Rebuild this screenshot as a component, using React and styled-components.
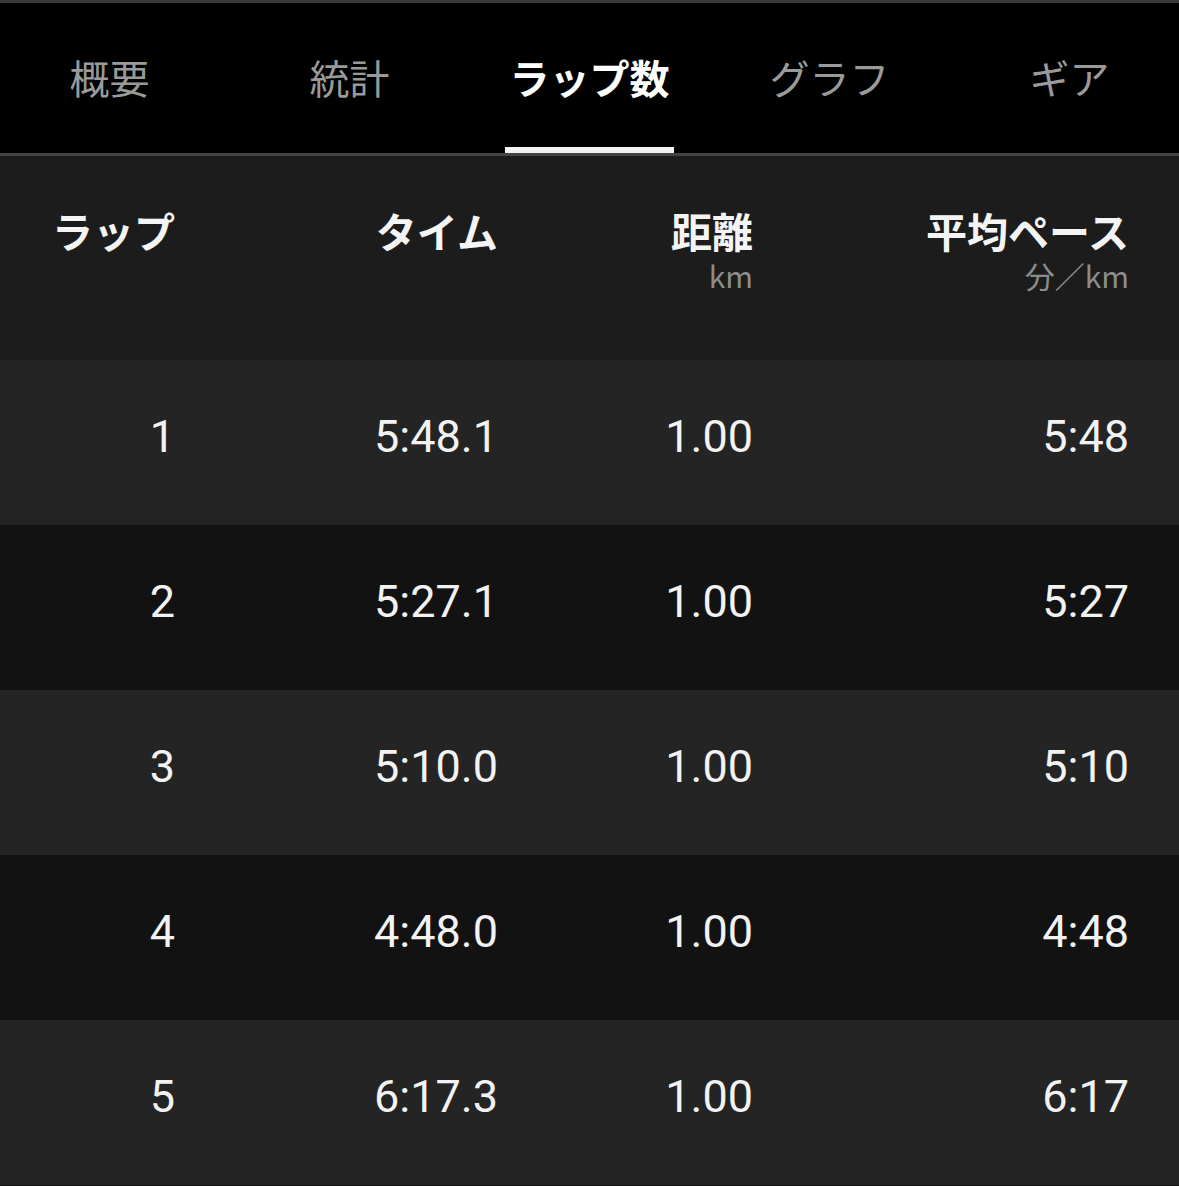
import React from 'react';
import styled, { createGlobalStyle } from 'styled-components';

const tabs = ['概要', '統計', 'ラップ数', 'グラフ', 'ギア'];
const activeTab = 2;

const columns = [
  { label: 'ラップ' },
  { label: 'タイム' },
  { label: '距離', unit: 'km' },
  { label: '平均ペース', unit: '分／km' },
];

const laps = [
  { lap: 1, time: '5:48.1', distance: '1.00', pace: '5:48' },
  { lap: 2, time: '5:27.1', distance: '1.00', pace: '5:27' },
  { lap: 3, time: '5:10.0', distance: '1.00', pace: '5:10' },
  { lap: 4, time: '4:48.0', distance: '1.00', pace: '4:48' },
  { lap: 5, time: '6:17.3', distance: '1.00', pace: '6:17' },
];

const App = () => {
  return (
    <Page>
      <GlobalStyle />
      <TabBar>
        {tabs.map((name, index) => (
          <Tab key={name}>
            <TabLabel active={index === activeTab}>{name}</TabLabel>
            <Indicator active={index === activeTab} />
          </Tab>
        ))}
      </TabBar>
      <HeaderRow>
        {columns.map((col) => (
          <HeaderCell key={col.label}>
            <HeaderLabel>{col.label}</HeaderLabel>
            {col.unit && <Unit>{col.unit}</Unit>}
          </HeaderCell>
        ))}
      </HeaderRow>
      {laps.map((row, index) => (
        <LapRow key={row.lap} dark={index % 2 === 1}>
          <Value>{row.lap}</Value>
          <Value>{row.time}</Value>
          <Value>{row.distance}</Value>
          <Value>{row.pace}</Value>
        </LapRow>
      ))}
      <BottomEdge />
    </Page>
  );
};
export default App;

const GlobalStyle = createGlobalStyle`
  html, body {
    margin: 0;
    padding: 0;
    background: #1c1c1c;
  }
  * {
    box-sizing: border-box;
  }
`;

const Page = styled.div`
  width: 1179px;
  min-height: 1186px;
  background: #1c1c1c;
  font-family: "Noto Sans CJK JP", "Noto Sans", sans-serif;
  overflow: hidden;
`;

const TabBar = styled.div`
  display: flex;
  justify-content: center;
  height: 156px;
  background: #000;
  border-top: 3px solid #3a3a3a;
  border-bottom: 3px solid #444;
  overflow: hidden;
`;

const Tab = styled.div`
  flex: 0 0 240px;
  display: flex;
  flex-direction: column;
  align-items: center;
`;

const TabLabel = styled.div`
  flex: 1;
  display: flex;
  align-items: center;
  padding-top: 4px;
  font-size: 40px;
  font-weight: ${(p) => (p.active ? 700 : 400)};
  color: ${(p) => (p.active ? '#fff' : '#9a9a9a')};
`;

const Indicator = styled.div`
  width: 169px;
  height: 6px;
  background: ${(p) => (p.active ? '#f4f4f4' : 'transparent')};
`;

const HeaderRow = styled.div`
  display: grid;
  grid-template-columns: 175px 323px 255px 376px;
  height: 204px;
  padding-top: 50px;
  background: #1c1c1c;
`;

const HeaderCell = styled.div`
  display: flex;
  flex-direction: column;
  align-items: flex-end;
`;

const HeaderLabel = styled.div`
  font-size: 41px;
  font-weight: 700;
  line-height: 49px;
  color: #f4f4f4;
`;

const Unit = styled.div`
  margin-top: 4px;
  font-size: 30px;
  line-height: 32px;
  color: #8c8c8c;
`;

const LapRow = styled.div`
  display: grid;
  grid-template-columns: 175px 323px 255px 376px;
  align-items: center;
  height: 165px;
  padding-bottom: 12px;
  background: ${(p) => (p.dark ? '#121212' : '#242424')};
`;

const Value = styled.div`
  text-align: right;
  font-family: Roboto, "Liberation Sans", sans-serif;
  font-size: 45px;
  font-weight: 400;
  color: #f2f2f2;
`;

const BottomEdge = styled.div`
  height: 1px;
  background: #111;
`;
